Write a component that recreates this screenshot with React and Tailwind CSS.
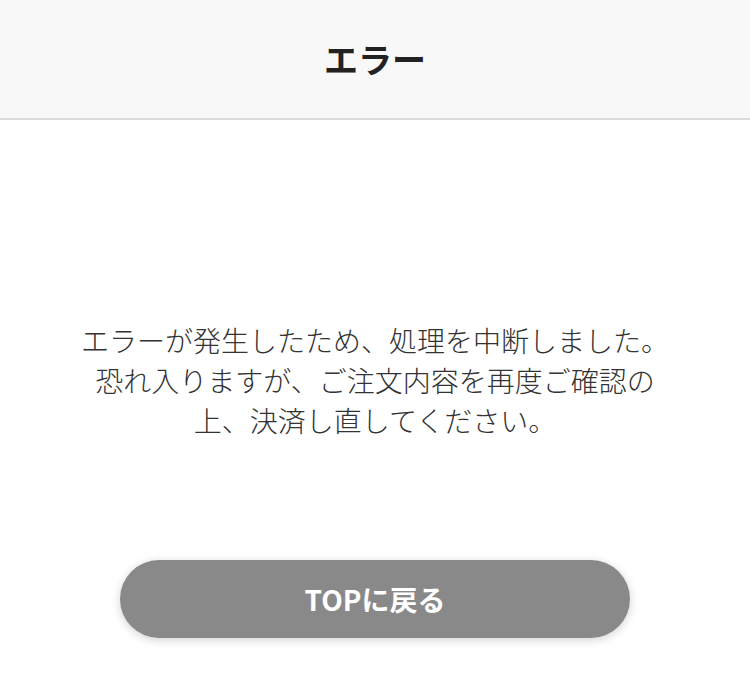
import React from 'react';

function App() {
    return (
        <div className='w-[750px] min-h-[680px] bg-white' style={{ fontFamily: '"Noto Sans CJK JP", "Noto Sans", sans-serif' }}>

            {/* ---------- header ---------- */}
            <header className='h-[120px] bg-[#f8f8f8] border-b-2 border-[#dddddd] flex items-center justify-center'>
                <h1 className='text-[34px] font-bold text-[#222222] leading-none'>エラー</h1>
            </header>

            {/* ---------- message ---------- */}
            <main className='flex flex-col items-center'>
                <p className='mt-[200px] w-[600px] text-center text-[28px] font-light leading-[40px] text-[#333333]'>
                    エラーが発生したため、処理を中断しました。恐れ入りますが、ご注文内容を再度ご確認の上、決済し直してください。
                </p>

                <button
                    type="button"
                    className='mt-[120px] w-[510px] h-[78px] rounded-full bg-[#898989] text-white text-[28px] font-bold shadow-[0_2px_10px_rgba(0,0,0,0.18)] flex items-center justify-center'
                >
                    TOPに戻る
                </button>
            </main>
        </div>
    )
}

export default App;
